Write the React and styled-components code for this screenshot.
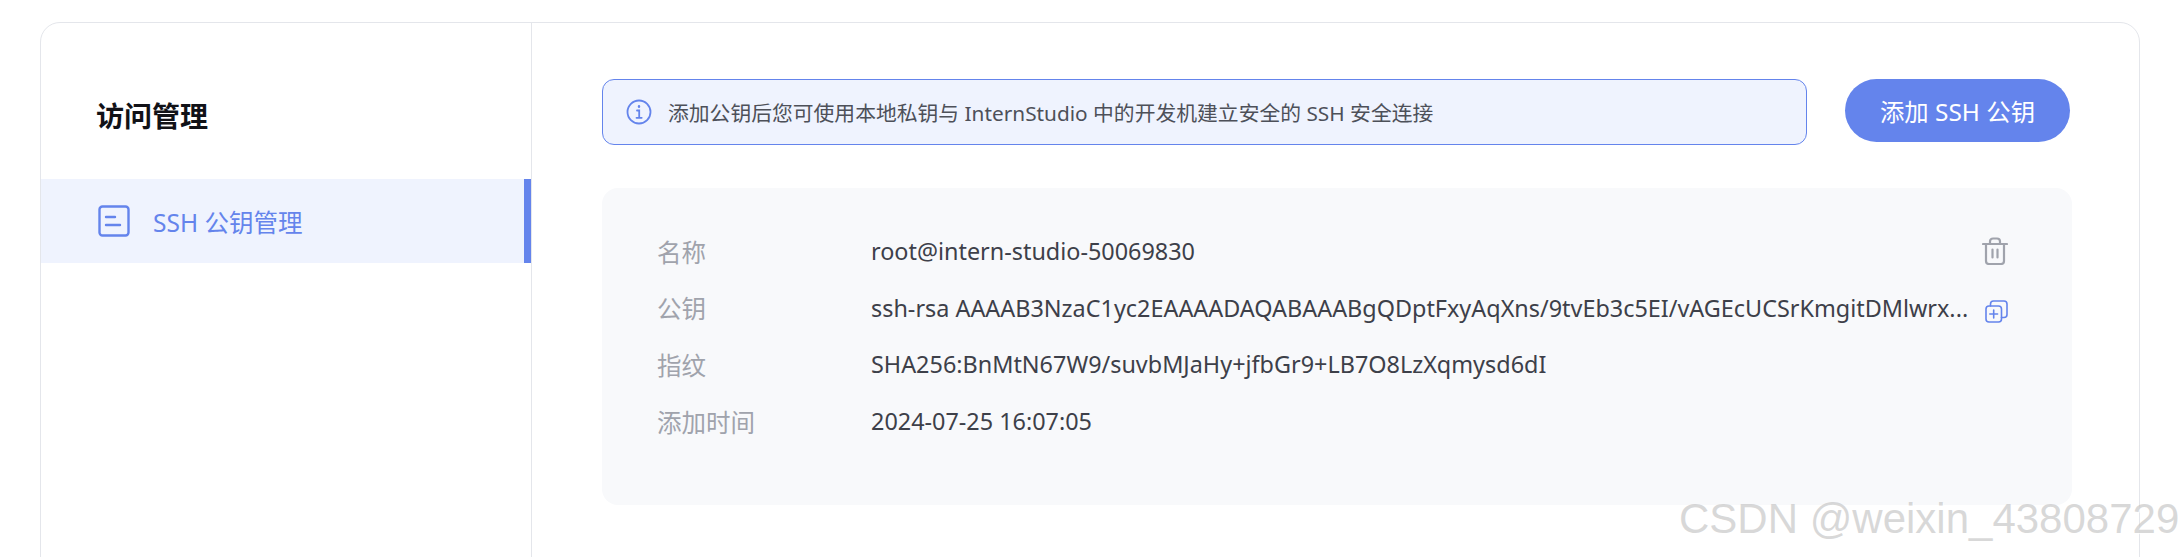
import React from 'react'
import styled, { createGlobalStyle } from 'styled-components'

const GlobalStyle = createGlobalStyle`
  html, body {
    margin: 0;
    height: 100%;
    overflow: hidden;
    background: #ffffff;
    font-family: "Noto Sans", "Noto Sans CJK SC", sans-serif;
  }
`

const Page = styled.div`
  position: relative;
  height: 557px;
  padding: 22px 41px 0 40px;
  box-sizing: border-box;
  overflow: hidden;
`

const Card = styled.div`
  display: flex;
  height: 600px;
  border: 1px solid #e4e6eb;
  border-radius: 20px;
  box-sizing: border-box;
`

const Sidebar = styled.aside`
  flex: 0 0 490px;
  border-right: 1px solid #e4e6eb;
`

const SideTitle = styled.h2`
  margin: 0;
  padding: 63px 0 33px 55px;
  font-size: 28px;
  line-height: 60px;
  font-weight: 700;
  color: #111217;
`

const SideItem = styled.div`
  display: flex;
  align-items: center;
  gap: 23px;
  height: 84px;
  padding-left: 57px;
  background: #eff3fe;
  border-right: 7px solid #6484ec;
  color: #6484ec;
  font-size: 24.5px;
`

const Main = styled.main`
  flex: 1;
  min-width: 0;
  padding: 56px 67px 0 70px;
`

const Toolbar = styled.div`
  display: flex;
  align-items: flex-start;
  gap: 38px;
  padding-right: 2px;
`

const Alert = styled.div`
  flex: 1;
  display: flex;
  align-items: center;
  gap: 16px;
  height: 66px;
  padding-left: 23px;
  box-sizing: border-box;
  background: #eff3fe;
  border: 1px solid #6484ec;
  border-radius: 12px;
  color: #4d5059;
  font-size: 20.8px;
`

const AddButton = styled.button`
  flex: 0 0 225px;
  height: 63px;
  border: 0;
  border-radius: 32px;
  background: #6484ec;
  color: #ffffff;
  font-family: inherit;
  font-size: 24.4px;
`

const Panel = styled.section`
  margin-top: 43px;
  height: 317px;
  padding: 35px 64px 0 55px;
  box-sizing: border-box;
  background: #f8f9fb;
  border-radius: 16px;
`

const Row = styled.div`
  display: grid;
  grid-template-columns: 214px minmax(0, 1fr) 36px;
  align-items: center;
  height: 56.6px;
`

const Label = styled.span`
  color: #a0a3ac;
  font-size: 24.5px;
`

const Value = styled.span`
  overflow: hidden;
  white-space: nowrap;
  color: #3d4049;
  font-size: 23.4px;
`

const Action = styled.span`
  display: flex;
  justify-content: flex-end;
  margin-top: ${props => props.$offset || 0}px;
`

const Watermark = styled.div`
  position: absolute;
  left: 1679px;
  top: 493px;
  color: rgba(190, 190, 190, 0.6);
  font-family: "Liberation Sans", Arial, sans-serif;
  font-size: 42px;
  line-height: 52px;
  white-space: nowrap;
  text-shadow: 1px 1px 1px rgba(255, 255, 255, 0.8);
`

const ListIcon = () => (
  <svg width="32" height="32" viewBox="0 0 32 32" fill="none" stroke="#6484ec" strokeWidth="2.4" strokeLinecap="round">
    <rect x="1.5" y="1.5" width="29" height="29" rx="3" />
    <path d="M8 12h9M8 20h14" />
  </svg>
)

const InfoIcon = () => (
  <svg width="26" height="26" viewBox="0 0 26 26" fill="none" stroke="#6484ec" strokeWidth="1.8" strokeLinecap="round">
    <circle cx="13" cy="13" r="11.5" />
    <path d="M11 11.5h2.2v7M10.5 18.8h5.2" />
    <path d="M13 7.2v.6" strokeWidth="2.4" />
  </svg>
)

const TrashIcon = () => (
  <svg width="26" height="28" viewBox="0 0 26 28" fill="none" stroke="#a0a3ac" strokeWidth="2.2" strokeLinecap="round" strokeLinejoin="round">
    <path d="M1 7h24" />
    <path d="M8 7V4.5A3 3 0 0 1 11 1.5h4a3 3 0 0 1 3 3V7" />
    <path d="M4 7v17a3 3 0 0 0 3 3h12a3 3 0 0 0 3-3V7" />
    <path d="M10.5 12.5v8M15.5 12.5v8" />
  </svg>
)

const CopyIcon = () => (
  <svg width="23" height="23" viewBox="0 0 23 23" fill="none" stroke="#6484ec" strokeWidth="1.6" strokeLinecap="round" strokeLinejoin="round">
    <rect x="1" y="6" width="15.5" height="16" rx="3" />
    <path d="M5.5 6V4a3 3 0 0 1 3-3H19a3 3 0 0 1 3 3v10.5a3 3 0 0 1-3 3h-2.5" />
    <path d="M8.7 10v8M4.8 14h7.8" />
  </svg>
)

const rows = [
  { label: '名称', value: 'root@intern-studio-50069830', action: <TrashIcon /> },
  {
    label: '公钥',
    value: 'ssh-rsa AAAAB3NzaC1yc2EAAAADAQABAAABgQDptFxyAqXns/9tvEb3c5EI/vAGEcUCSrKmgitDMlwrx...',
    action: <CopyIcon />,
    offset: 8
  },
  { label: '指纹', value: 'SHA256:BnMtN67W9/suvbMJaHy+jfbGr9+LB7O8LzXqmysd6dI' },
  { label: '添加时间', value: '2024-07-25 16:07:05' }
]

export default function App() {
  return (
    <Page>
      <GlobalStyle />
      <Card>
        <Sidebar>
          <SideTitle>访问管理</SideTitle>
          <SideItem>
            <ListIcon />
            SSH 公钥管理
          </SideItem>
        </Sidebar>
        <Main>
          <Toolbar>
            <Alert>
              <InfoIcon />
              添加公钥后您可使用本地私钥与 InternStudio 中的开发机建立安全的 SSH 安全连接
            </Alert>
            <AddButton>添加 SSH 公钥</AddButton>
          </Toolbar>
          <Panel>
            {rows.map(row => (
              <Row key={row.label}>
                <Label>{row.label}</Label>
                <Value>{row.value}</Value>
                <Action $offset={row.offset}>{row.action}</Action>
              </Row>
            ))}
          </Panel>
        </Main>
      </Card>
      <Watermark>CSDN @weixin_43808729</Watermark>
    </Page>
  )
}
